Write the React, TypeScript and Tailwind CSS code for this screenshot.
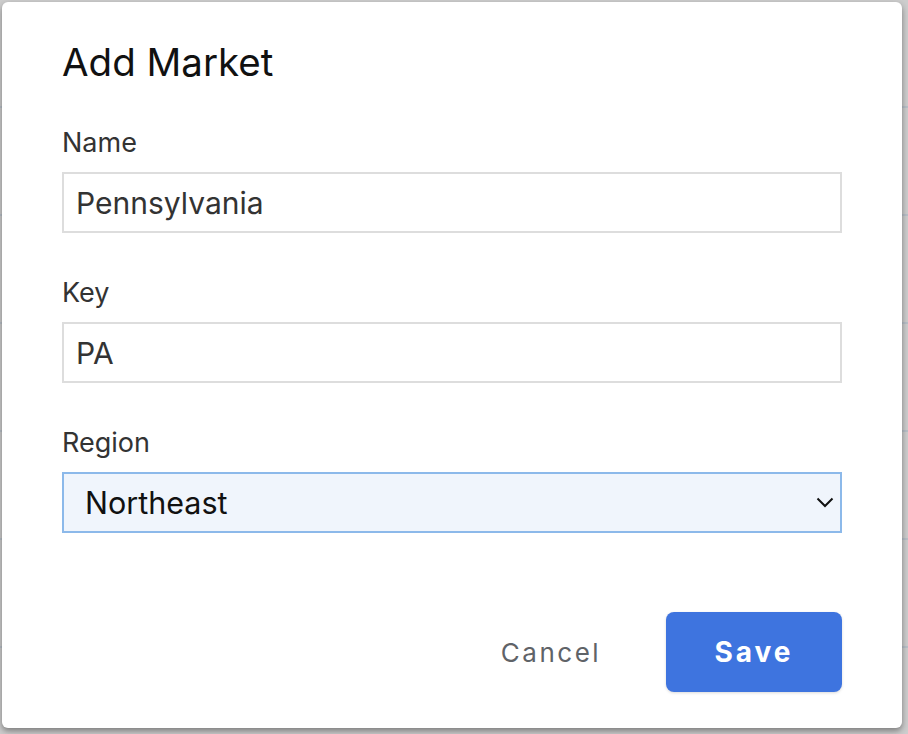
import React from 'react'

const ROWS = [0, 1, 2, 3, 4, 5, 6]

function Field({ label, value }: { label: string; value: string }) {
  return (
    <div className="flex flex-col">
      <label className="text-[27px] leading-[32px] text-[#333333]">{label}</label>
      <input
        readOnly
        value={value}
        className="mt-[13px] h-[61px] w-full border-2 border-[#dddddd] bg-white pl-[12px] text-[30px] text-[#333333] outline-none"
      />
    </div>
  )
}

export default function App() {
  return (
    <div className="relative h-[734px] w-[908px] overflow-hidden bg-[#cdcdcd] font-['Inter','Liberation_Sans',sans-serif]">
      {/* page behind the modal */}
      <div className="flex flex-col">
        {ROWS.map((r) => (
          <div key={r} className="h-[108px] border-b-2 border-[#b9c0c8]" />
        ))}
      </div>

      {/* Dialog */}
      <div className="absolute left-[2px] top-[2px] flex h-[726px] w-[900px] flex-col rounded-[6px] bg-white px-[60px] pt-[36px] shadow-[0_3px_6px_rgba(0,0,0,0.4)]">
        <h2 className="text-[38.5px] leading-[48px] text-[#111111]">Add Market</h2>

        <div className="mt-[41px] flex flex-col gap-[44px]">
          <Field label="Name" value="Pennsylvania" />
          <Field label="Key" value="PA" />

          <div className="flex flex-col">
            <label className="text-[27px] leading-[32px] text-[#333333]">Region</label>
            <div className="relative mt-[13px]">
              <select
                defaultValue="Northeast"
                className="h-[61px] w-full appearance-none border-2 border-[#8cb9ea] bg-[#f0f5fc] pl-[21px] text-[30.5px] text-[#111111] outline-none"
              >
                <option>Northeast</option>
                <option>Southeast</option>
                <option>Midwest</option>
                <option>West</option>
              </select>
              <svg
                className="pointer-events-none absolute right-[8px] top-[25px]"
                width="18"
                height="11"
                viewBox="0 0 18 11"
                fill="none"
              >
                <path d="M1.5 1.5 L9 9 L16.5 1.5" stroke="#111111" strokeWidth="2" />
              </svg>
            </div>
          </div>
        </div>

        <div className="mt-[79px] flex items-center justify-end gap-[45px]">
          <button className="w-[140px] text-center text-[26px] tracking-[2.5px] text-[#5f6368]">Cancel</button>
          <button className="h-[80px] w-[176px] rounded-[8px] bg-[#3e74df] text-[28px] font-bold tracking-[3px] text-white shadow-[0_1px_3px_rgba(0,0,0,0.15)]">
            Save
          </button>
        </div>
      </div>
    </div>
  )
}
